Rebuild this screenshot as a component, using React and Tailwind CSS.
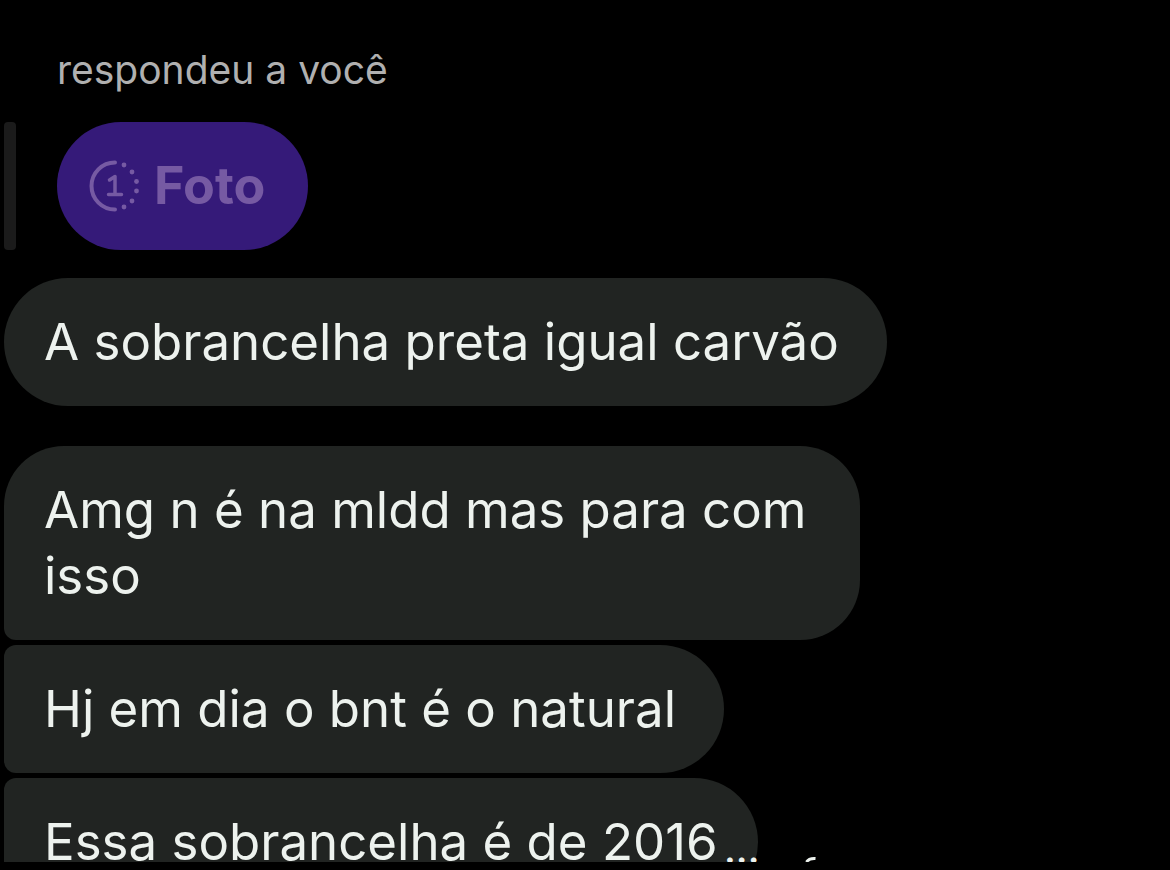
const mensagens = [
  { id: 1, texto: 'A sobrancelha preta igual carvão', forma: 'max-w-[90%] pr-12 rounded-[64px] mb-10' },
  { id: 2, texto: 'Amg n é na mldd mas para com isso', forma: 'max-w-[856px] pr-12 rounded-[60px] rounded-bl-xl mb-[5px]' },
  { id: 3, texto: 'Hj em dia o bnt é o natural', forma: 'max-w-[90%] pr-12 rounded-r-[64px] rounded-l-xl mb-[5px]' },
  { id: 4, texto: 'Essa sobrancelha é de 2016', forma: 'max-w-[90%] pr-10 rounded-r-[64px] rounded-l-xl' },
]

function IconeVisualizacaoUnica() {
  return (
    <svg viewBox="0 0 52 52" className="size-[52px]" fill="none" stroke="currentColor" strokeLinecap="round" aria-hidden="true">
      <path d="M27 2.5A23.5 23.5 0 0 0 27 49.5" strokeWidth="4" />
      <path d="M21.500 20L27 16.500V34.500M20.500 34.500H33.500" strokeWidth="3.500" strokeLinejoin="round" />
      <g fill="currentColor" stroke="none">
        <circle cx="36" cy="5" r="2.400" />
        <circle cx="44" cy="12" r="2.400" />
        <circle cx="48.500" cy="21.500" r="2.400" />
        <circle cx="48.500" cy="31" r="2.400" />
        <circle cx="44" cy="41" r="2.400" />
        <circle cx="36" cy="47" r="2.400" />
      </g>
    </svg>
  )
}

function App() {
  return (
    <div className="h-screen bg-black pb-2 flex flex-col font-[Inter,'Noto_Sans',sans-serif]">
      <main className="relative flex-1 min-h-0 overflow-hidden pl-1 pt-11">
        <p className="pl-[53px] text-[39px] leading-[52px] text-[#b0b0b0]">respondeu a você</p>

        <div className="flex mt-[26px] mb-7 gap-[41px]">
          <div className="w-3 rounded-sm bg-[#1b1b1b]"></div>
          <button className="flex items-center gap-3.5 h-32 pl-[31px] pr-[43px] rounded-full bg-[#351a79] text-[#765aa3] cursor-pointer">
            <IconeVisualizacaoUnica />
            <span className="text-[52px] leading-[66px] font-bold">Foto</span>
          </button>
        </div>

        {mensagens.map(m => (
          <p
            key={m.id}
            className={`w-fit pl-10 py-[31px] text-[51px] leading-[66px] text-[#edf2ee] bg-[#212422] ${m.forma}`}
          >
            {m.texto}
          </p>
        ))}

        {/* pontas da legenda que começa abaixo da área visível */}
        <span className="absolute bottom-0 left-[724px] text-[39px] leading-[26px] font-medium text-[#edf2ee]">...</span>
        <svg viewBox="0 0 12 6" className="absolute bottom-0 left-[805px] w-3 h-1.5 text-[#edf2ee]" fill="none" stroke="currentColor" strokeWidth="3" aria-hidden="true">
          <path d="M1.500 6Q4 2 10.500 2.500" />
        </svg>
      </main>
    </div>
  )
}

export default App
